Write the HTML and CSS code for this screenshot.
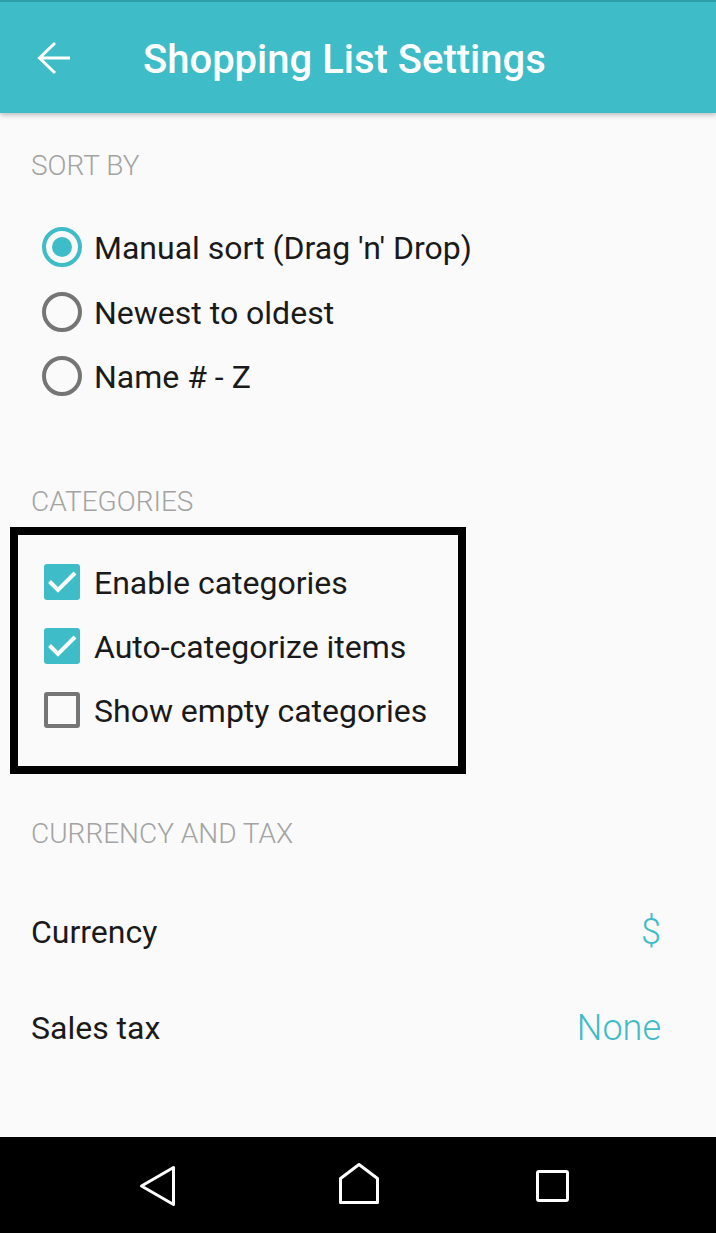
FILE: index.html
```html
<!DOCTYPE html>
<html>
<head>
<meta charset="utf-8">
<link rel="stylesheet" href="styles.css">
</head>
<body>
<div class="screen">
  <header class="appbar">
    <svg class="back" width="40" height="40" viewBox="0 0 40 40"><path d="M35 18H5M20 3L4.5 18 20 33" fill="none" stroke="#fff" stroke-width="3"/></svg>
    <h1 class="title">Shopping List Settings</h1>
  </header>
  <main class="content">
    <section class="group group-sort">
      <div class="group-title">SORT BY</div>
      <ul class="options">
        <li class="option"><span class="radio radio-on"></span><span class="label">Manual sort (Drag 'n' Drop)</span></li>
        <li class="option"><span class="radio"></span><span class="label">Newest to oldest</span></li>
        <li class="option"><span class="radio"></span><span class="label">Name # - Z</span></li>
      </ul>
    </section>
    <section class="group group-cat">
      <div class="group-title">CATEGORIES</div>
      <ul class="options boxed">
        <li class="option"><span class="check check-on"><svg width="36" height="36" viewBox="0 0 36 36"><path d="M5.5 17.5l8.5 8.5 17-17" fill="none" stroke="#fff" stroke-width="4"/></svg></span><span class="label">Enable categories</span></li>
        <li class="option"><span class="check check-on"><svg width="36" height="36" viewBox="0 0 36 36"><path d="M5.5 17.5l8.5 8.5 17-17" fill="none" stroke="#fff" stroke-width="4"/></svg></span><span class="label">Auto-categorize items</span></li>
        <li class="option"><span class="check"></span><span class="label">Show empty categories</span></li>
      </ul>
    </section>
    <section class="group group-cur">
      <div class="group-title">CURRENCY AND TAX</div>
      <div class="pref"><span class="pref-name">Currency</span><span class="pref-value">$</span></div>
      <div class="pref"><span class="pref-name">Sales tax</span><span class="pref-value">None</span></div>
    </section>
  </main>
  <nav class="navbar">
    <svg width="40" height="44" viewBox="0 0 40 44"><path d="M35.5 3.5V40.5L3.5 22Z" fill="none" stroke="#fff" stroke-width="3" stroke-linejoin="round"/></svg>
    <svg width="44" height="46" viewBox="0 0 44 46"><path d="M22 3.5L40.5 17.5V41.5H3.5V17.5Z" fill="none" stroke="#fff" stroke-width="3" stroke-linejoin="round"/></svg>
    <svg width="36" height="36" viewBox="0 0 36 36"><rect x="3.5" y="3.5" width="30" height="29" rx="1.5" fill="none" stroke="#fff" stroke-width="3"/></svg>
  </nav>
</div>
</body>
</html>
```

FILE: styles.css
```css
* { box-sizing: border-box; }
html, body { margin: 0; padding: 0; }
body {
  font-family: Roboto, "Noto Sans", "Liberation Sans", sans-serif;
  background: #fafafa;
  color: #1a1a1a;
}
.screen {
  width: 716px;
  height: 1233px;
  display: flex;
  flex-direction: column;
  overflow: hidden;
}
.appbar {
  height: 113px;
  flex: none;
  background: #3ebcc7;
  border-top: 2px solid #2f9ea9;
  display: flex;
  align-items: center;
  box-shadow: 0 2px 5px rgba(0,0,0,0.25);
  position: relative;
  z-index: 1;
}
.back {
  margin-left: 35px;
  margin-top: 4px;
  flex: none;
}
.title {
  margin: 0 0 0 68px;
  font-size: 40px;
  font-weight: 500;
  color: #fff;
  letter-spacing: 0;
  line-height: 44px;
  margin-top: 4px;
}
.content {
  flex: 1;
  display: flex;
  flex-direction: column;
}
.group-title {
  font-size: 28px;
  font-weight: 300;
  color: #a3a3a3;
  line-height: 32px;
  padding-left: 31px;
}
.group-sort { padding-top: 37px; }
.group-sort .options { margin-top: 33px; }
.options {
  list-style: none;
  margin: 0;
  padding: 0;
}
.option {
  height: 64px;
  display: flex;
  align-items: center;
  font-size: 32px;
  line-height: 36px;
}
.group-sort .option { padding-left: 42px; height: 64.5px; }
.radio {
  width: 40px;
  height: 40px;
  border-radius: 50%;
  border: 4px solid #757575;
  display: flex;
  align-items: center;
  justify-content: center;
  flex: none;
  margin-right: 12px;
}
.radio-on { border-color: #3ebcc7; }
.radio-on::after {
  content: "";
  width: 20px;
  height: 20px;
  border-radius: 50%;
  background: #3ebcc7;
}
.label { padding-top: 2px; }
.group-cat { margin-top: 77px; }
.boxed {
  margin: 9px 0 0 10px;
  width: 456px;
  border: 8px solid #000;
  padding: 15px 0 24px 26px;
}
.check {
  width: 36px;
  height: 36px;
  border-radius: 3px;
  border: 4px solid #757575;
  flex: none;
  margin-right: 14px;
  position: relative;
}
.check-on {
  border: none;
  background: #3ebcc7;
}
.check svg { display: block; }
.group-cur { margin-top: 44px; }
.group-cur .group-title { margin-bottom: 34px; }
.pref {
  height: 96px;
  display: flex;
  align-items: center;
  justify-content: space-between;
  padding: 0 55px 0 31px;
}
.pref-name {
  font-size: 32px;
  color: #1a1a1a;
}
.pref-value {
  font-size: 36px;
  font-weight: 300;
  color: #3ebcc7;
}
.navbar {
  height: 96px;
  flex: none;
  background: #000;
  display: flex;
  align-items: center;
  padding-left: 138px;
  gap: 0;
}
.navbar svg:nth-child(1) { margin-top: 2px; }
.navbar svg:nth-child(2) { margin-left: 159px; margin-top: -2px; }
.navbar svg:nth-child(3) { margin-left: 153px; margin-top: 2px; }
```
